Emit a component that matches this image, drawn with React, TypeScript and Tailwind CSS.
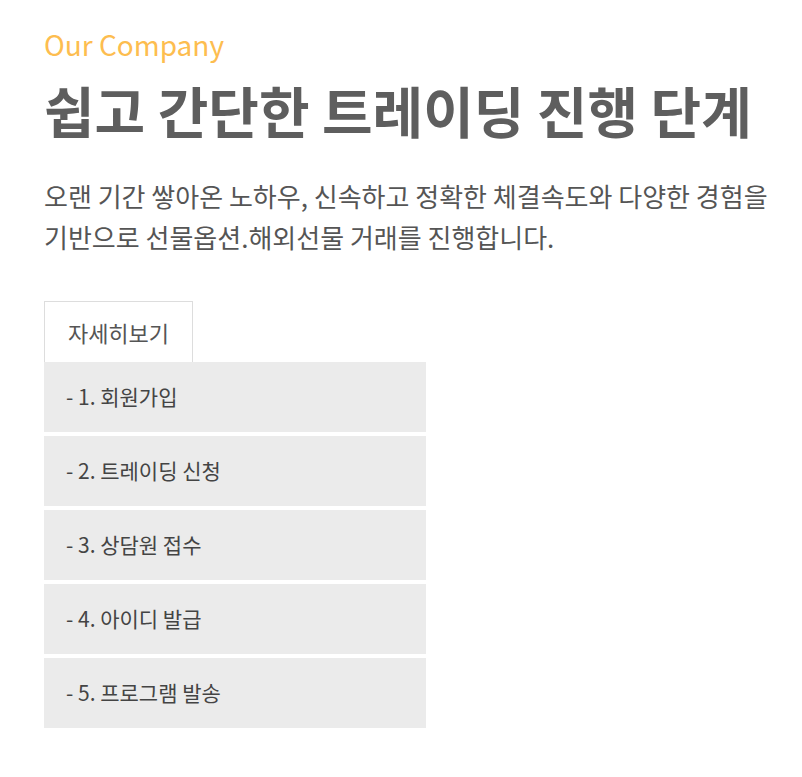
import React from "react";

const steps = ["- 1. 회원가입", "- 2. 트레이딩 신청", "- 3. 상담원 접수", "- 4. 아이디 발급", "- 5. 프로그램 발송"];

export default function App() {
  return (
    <div
      className="min-h-[777px] bg-white pl-[44px] pt-[24px]"
      style={{ fontFamily: '"Noto Sans CJK KR", "Noto Sans", sans-serif' }}
    >
      <div className="text-[28px] leading-[40px] text-[#fdbd4f]">Our Company</div>
      <h1 className="mt-[13px] text-[55px] leading-[64px] font-bold text-[#5e5e5e] whitespace-nowrap">쉽고 간단한 트레이딩 진행 단계</h1>
      <p className="mt-[34px] text-[26px] leading-[41px] text-[#555555] whitespace-nowrap">
        오랜 기간 쌓아온 노하우, 신속하고 정확한 체결속도와 다양한 경험을
        <br />
        기반으로 선물옵션.해외선물 거래를 진행합니다.
      </p>
      <div className="mt-[44px] flex flex-col items-start">
        <div className="h-[61px] w-[149px] border border-[#dddddd] border-b-0 bg-white flex items-center justify-center text-[22px] text-[#555555]">
          자세히보기
        </div>
        <div className="flex flex-col gap-[4px]">
          {steps.map((s) => (
            <div
              key={s}
              className="h-[70px] w-[382px] bg-[#ebebeb] flex items-center pl-[22px] text-[21px] text-[#444444]"
            >
              {s}
            </div>
          ))}
        </div>
      </div>
    </div>
  );
}
